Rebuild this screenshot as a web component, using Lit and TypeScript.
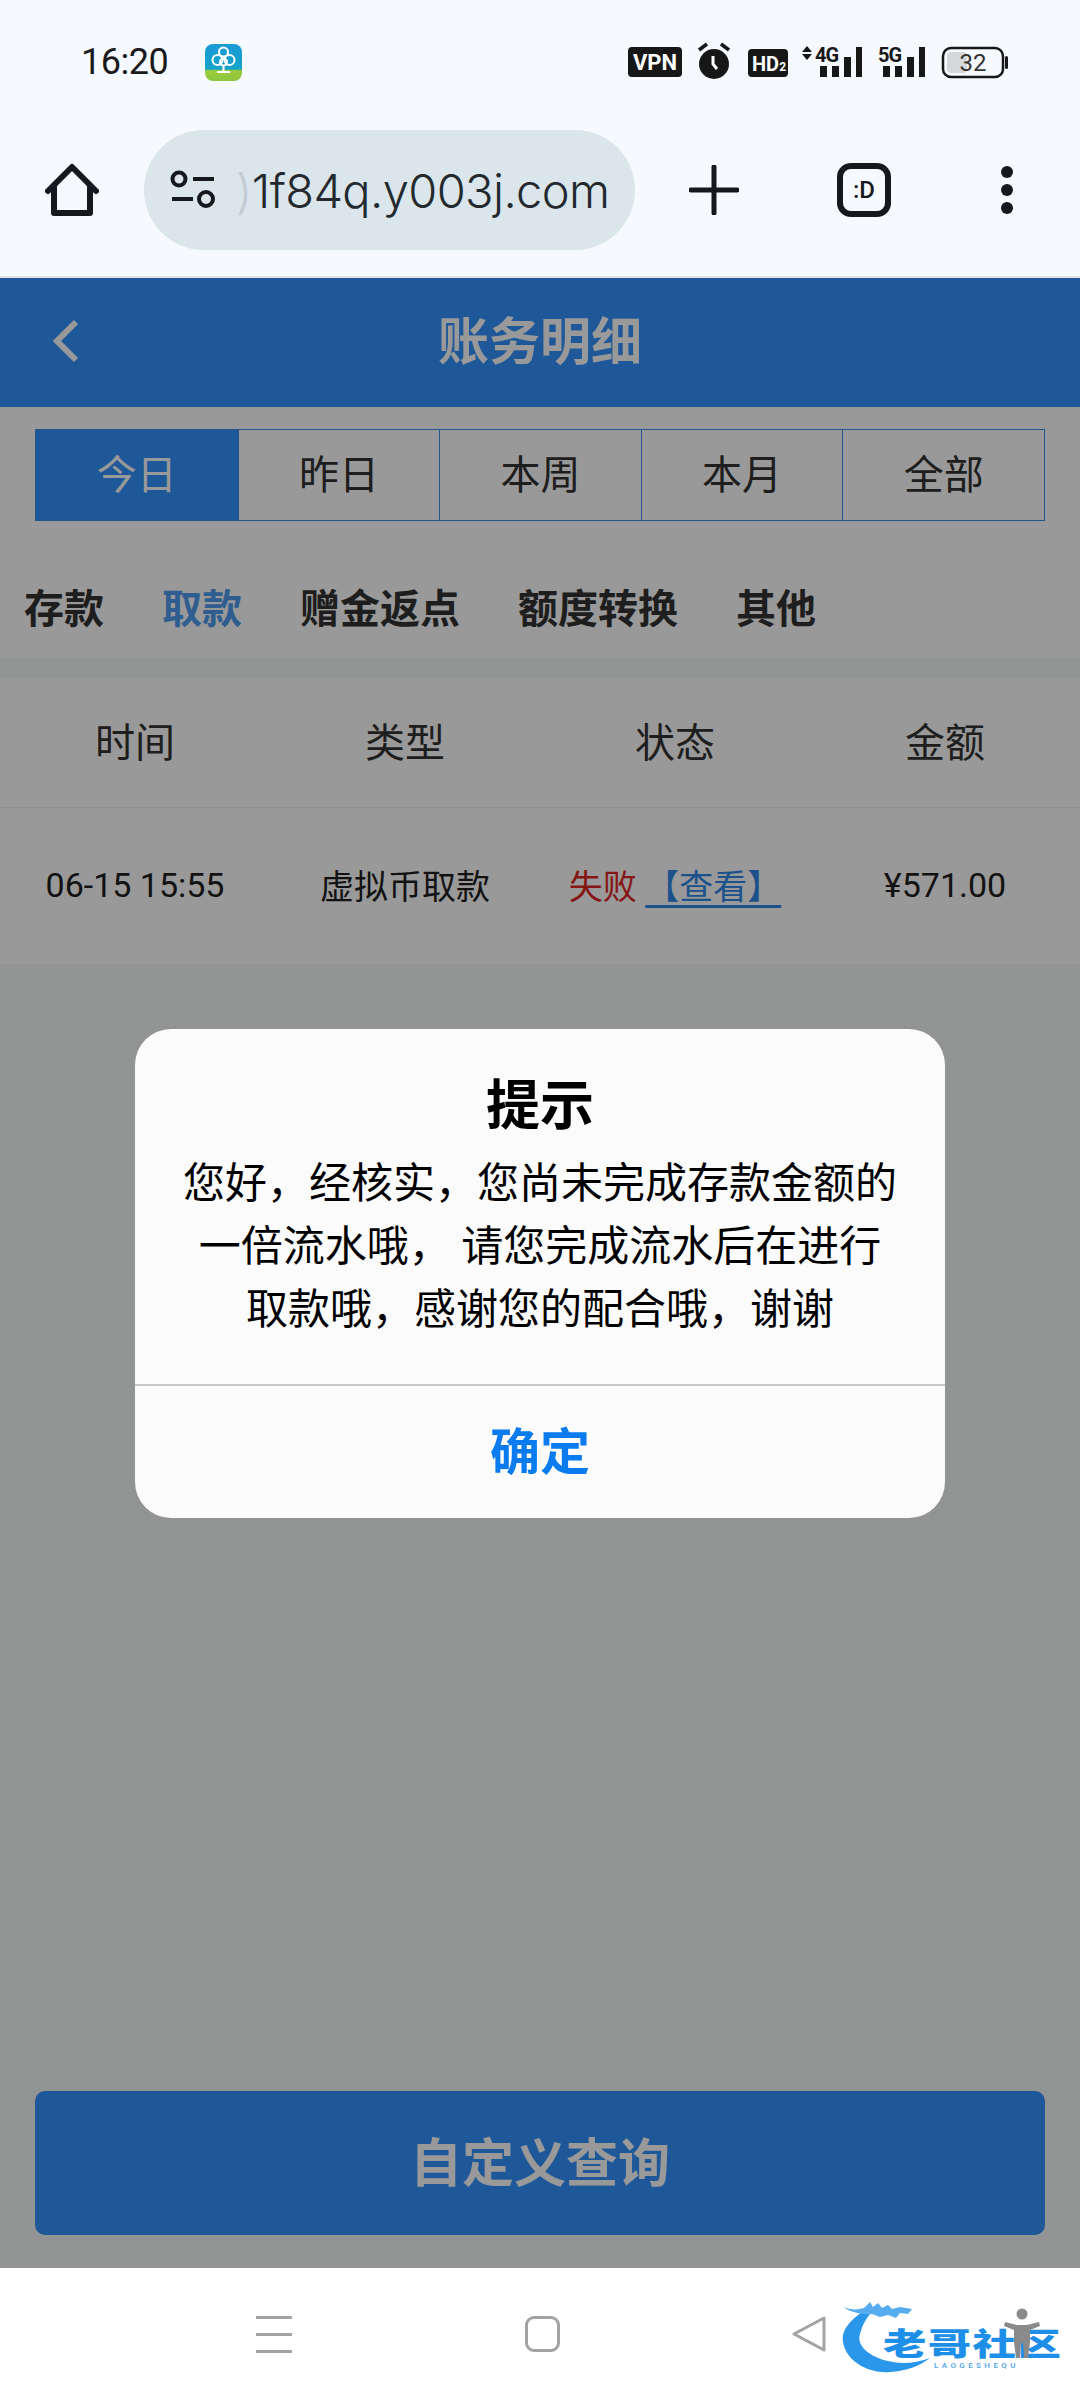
import { LitElement, html, css } from "lit";
import { customElement } from "lit/decorators.js";

const CJK = `Roboto, "Noto Sans CJK SC", sans-serif`;

@customElement("app-root")
export class AppRoot extends LitElement {
  static styles = css`
    :host { display: block; width: 1080px; height: 2400px; font-family: ${css([CJK] as any)}; overflow: hidden; background: #fff; }
    * { box-sizing: border-box; }
    .root { width: 1080px; height: 2400px; display: flex; flex-direction: column; }
    .chrome { height: 278px; background: #f6f9fe; border-bottom: 2px solid #dfe3e8; display: flex; flex-direction: column; }
    .status { height: 124px; display: flex; align-items: center; padding: 0 0 0 81px; position: relative; }
    .time { font-size: 36px; color: #1a1a1a; width: 124px; letter-spacing: -0.5px; line-height: 1; }
    .appicon { width: 37px; height: 37px; display: block; }
    .sicons { margin-left: auto; margin-right: 71px; display: flex; align-items: center; }
    .sicons svg { display: block; }
    .toolbar { height: 152px; display: flex; align-items: center; margin-top: -10px; position: relative; }
    .home { width: 54px; height: 56px; margin-left: 45px; display: block; }
    .pill { width: 491px; height: 120px; border-radius: 60px; background: #dae5ec; margin-left: 45px; display: flex; align-items: center; padding-left: 26px; overflow: hidden; }
    .tune { width: 46px; height: 40px; display: block; flex: none; }
    .url { font-family: "Inter", Roboto, sans-serif; font-size: 47px; color: #24292e; margin-left: 20px; white-space: nowrap; letter-spacing: -0.6px; line-height: 1; font-weight: 300; }
    .url i { font-style: normal; color: #c3ccd2; }
    .plus { width: 50px; height: 50px; margin-left: 54px; display: block; }
    .tabcount { width: 54px; height: 54px; margin-left: 98px; border: 6px solid #15181c; border-radius: 14px; font: 500 24px Roboto, sans-serif; color: #15181c; display: flex; align-items: center; justify-content: center; }
    .dots { width: 12px; height: 48px; margin-left: 110px; display: flex; flex-direction: column; justify-content: space-between; }
    .dots b { display: block; width: 12px; height: 12px; border-radius: 50%; background: #15181c; }

    .main { flex: 1; position: relative; display: flex; flex-direction: column; background: #f3f5f5; min-height: 0; }
    .header { height: 129px; background: #3493ff; position: relative; display: flex; align-items: center; justify-content: center; color: #fff; font-size: 51px; font-weight: 700; flex: none; padding-bottom: 10px; }
    .back { position: absolute; left: 50px; top: 40px; width: 32px; height: 46px; }
    .top { background: #ffffff; padding-top: 22px; flex: none; }
    .range { margin: 0 35px; height: 92px; display: grid; grid-template-columns: repeat(5, 1fr); border: 1px solid #3f8fe8; }
    .range div { display: flex; align-items: center; justify-content: center; font-size: 40px; color: #333; border-left: 1px solid #3f8fe8; padding-bottom: 6px; }
    .range div:first-child { border-left: 0; background: #3493ff; color: #fff; }
    .sub { height: 136px; display: flex; align-items: center; padding: 33px 0 0 24px; gap: 58px; font-size: 40px; font-weight: 700; color: #333; }
    .sub .on { color: #4f9cf0; }
    .band { height: 22px; background: #f3f8f5; flex: none; }
    .tbl { background: #fff; flex: none; }
    .tr { display: grid; grid-template-columns: repeat(4, 1fr); text-align: center; align-items: center; color: #333; }
    .th { height: 129px; font-size: 40px; border-bottom: 1px solid #f0f0f0; padding-bottom: 6px; }
    .td { height: 156px; font-size: 34px; color: #1e1e1e; padding-bottom: 3px; }
    .fail { color: #e02626; }
    .see { color: #2f88e8; text-decoration: underline; text-underline-offset: 6px; text-decoration-thickness: 3px; }
    .spacer { flex: 1; }
    .query { margin: 0 35px 33px; height: 144px; border-radius: 10px; background: #3493ff; color: #fff; font-size: 52px; font-weight: 700; display: flex; align-items: center; justify-content: center; flex: none; padding-bottom: 8px; }
    .scrim { position: absolute; inset: 0; background: rgba(0,0,0,.4); display: flex; align-items: center; justify-content: center; }
    .modal { width: 810px; height: 489px; background: #fbfbfb; border-radius: 36px; display: flex; flex-direction: column; color: #000; text-align: center; }
    .mtitle { font-size: 54px; font-weight: 700; line-height: 64px; margin-top: 46px; }
    .mbody { font-size: 42px; line-height: 63px; margin-top: 13px; padding: 0 20px; white-space: pre-line; height: 232px; }
    .mbtn { border-top: 2px solid #c9c9c9; flex: 1; display: flex; align-items: center; justify-content: center; font-size: 50px; font-weight: 700; color: #0a7cf0; padding-bottom: 8px; }

    .nav { height: 132px; background: #fff; position: relative; flex: none; display: flex; align-items: center; padding-left: 256px; }
    .menu { width: 36px; height: 37px; display: flex; flex-direction: column; justify-content: space-between; }
    .menu b { display: block; height: 3px; background: #a3a3a3; }
    .sq { width: 35px; height: 36px; margin-left: 233px; border: 3px solid #a3a3a3; border-radius: 9px; }
    .tri { width: 36px; height: 38px; margin-left: 231px; display: block; }
    .logo { position: absolute; left: 840px; top: 30px; width: 226px; height: 76px; }
    .logo svg { position: absolute; inset: 0; width: 226px; height: 76px; }
    .ltext { position: absolute; left: 43px; top: 28px; font: 900 31px/31px "Noto Sans CJK SC", sans-serif; color: #1e8fe8; white-space: nowrap; letter-spacing: 1px; transform: scaleX(1.4); transform-origin: left top; }
    .lsub { position: absolute; left: 94px; top: 64px; font: 500 8px/8px Roboto, sans-serif; color: #4aa3e8; letter-spacing: 3.4px; white-space: nowrap; }
    .logo .person { position: absolute; left: 164px; top: 10px; inset-inline-start: 164px; width: 36px; height: 50px; }
  `;

  render() {
    return html`<div class="root">
      <div class="chrome">
        <div class="status">
          <div class="time">16:20</div>
          <svg class="appicon" viewBox="0 0 37 37">
            <defs><linearGradient id="g" x1="0" y1="0" x2="0" y2="1"><stop offset="0" stop-color="#1a9ad6"/><stop offset=".68" stop-color="#16a3c8"/><stop offset=".72" stop-color="#9ccb3b"/><stop offset="1" stop-color="#8cc63f"/></linearGradient></defs>
            <rect width="37" height="37" rx="8" fill="url(#g)"/>
            <g fill="none" stroke="#fff" stroke-width="2"><circle cx="18.5" cy="8" r="4.5"/><circle cx="12.5" cy="16" r="5"/><circle cx="24.5" cy="16" r="5"/><circle cx="18.5" cy="18" r="3.5"/></g>
            <path d="M18.5 21v6M12 28h13" stroke="#fff" stroke-width="2"/>
          </svg>
          <div class="sicons">
            <svg width="381" height="40" viewBox="628 42 381 40">
              <rect x="628" y="47" width="54" height="30" rx="4" fill="#171717"/>
              <text x="655" y="70" text-anchor="middle" font-family="Roboto, sans-serif" font-weight="700" font-size="22" fill="#fff">VPN</text>
              <circle cx="714" cy="64" r="15" fill="#171717"/>
              <path d="M699 50l8-6M729 50l-8-6" stroke="#171717" stroke-width="3.5" fill="none"/>
              <path d="M713 56v8l4 5" stroke="#fff" stroke-width="3" fill="none"/>
              <rect x="748" y="49" width="40" height="28" rx="4" fill="#171717"/>
              <text x="752" y="71" font-family="Roboto, sans-serif" font-weight="700" font-size="20" fill="#fff">HD<tspan font-size="12">2</tspan></text>
              <path d="M807 46l5 6h-10zM807 60l5-6h-10z" fill="#171717"/>
              <text x="815" y="62" font-family="Roboto, sans-serif" font-weight="700" font-size="20" letter-spacing="-1" fill="#171717">4G</text>
              <path d="M820 66h7v11h-7zM832 66h7v11h-7zM844 57h7v20h-7zM856 47h6v30h-6z" fill="#171717"/>
              <text x="878" y="62" font-family="Roboto, sans-serif" font-weight="700" font-size="20" letter-spacing="-1" fill="#171717">5G</text>
              <path d="M883 66h7v11h-7zM895 66h7v11h-7zM907 57h7v20h-7zM919 47h6v30h-6z" fill="#171717"/>
              <rect x="943" y="48" width="60" height="29" rx="8" fill="none" stroke="#171717" stroke-width="2.5"/>
              <rect x="947" y="52" width="20" height="21" rx="4" fill="#d5d8da"/>
              <rect x="1005" y="56" width="3" height="13" rx="1.5" fill="#171717"/>
              <text x="973" y="71" text-anchor="middle" font-family="Roboto, sans-serif" font-size="24" fill="#333">32</text>
            </svg>
          </div>
        </div>
        <div class="toolbar">
          <svg class="home" viewBox="0 0 54 56"><path d="M3 29L27 5l24 24M9 24v27h36V24" fill="none" stroke="#15181c" stroke-width="6" stroke-linejoin="round" stroke-linecap="round"/></svg>
          <div class="pill">
            <svg class="tune" viewBox="0 0 46 40" fill="none" stroke="#15181c" stroke-width="4"><circle cx="9" cy="9" r="6.5"/><path d="M23 9h21M2 29h21"/><circle cx="36" cy="29" r="7"/></svg>
            <div class="url"><i>)</i>1f84q.y003j.com</div>
          </div>
          <svg class="plus" viewBox="0 0 50 50"><path d="M25 2v46M2 25h46" stroke="#15181c" stroke-width="5" stroke-linecap="round"/></svg>
          <div class="tabcount">:D</div>
          <div class="dots"><b></b><b></b><b></b></div>
        </div>
      </div>
      <div class="main">
        <div class="header">
          <svg class="back" viewBox="0 0 32 46"><path d="M26 4L7 23l19 19" fill="none" stroke="#fff" stroke-width="6"/></svg>
          账务明细
        </div>
        <div class="top">
          <div class="range"><div>今日</div><div>昨日</div><div>本周</div><div>本月</div><div>全部</div></div>
          <div class="sub"><span>存款</span><span class="on">取款</span><span>赠金返点</span><span>额度转换</span><span>其他</span></div>
        </div>
        <div class="band"></div>
        <div class="tbl">
          <div class="tr th"><div>时间</div><div>类型</div><div>状态</div><div>金额</div></div>
          <div class="tr td"><div>06-15 15:55</div><div>虚拟币取款</div><div><span class="fail">失败</span> <span class="see">【查看】</span></div><div>¥571.00</div></div>
        </div>
        <div class="spacer"></div>
        <div class="query">自定义查询</div>
        <div class="scrim">
          <div class="modal">
            <div class="mtitle">提示</div>
            <div class="mbody">您好，经核实，您尚未完成存款金额的
一倍流水哦， 请您完成流水后在进行
取款哦，感谢您的配合哦，谢谢</div>
            <div class="mbtn">确定</div>
          </div>
        </div>
      </div>
      <div class="nav">
        <div class="menu"><b></b><b></b><b></b></div>
        <div class="sq"></div>
        <svg class="tri" viewBox="0 0 36 38"><path d="M33 3v32L3 19z" fill="none" stroke="#a3a3a3" stroke-width="3" stroke-linejoin="round"/></svg>
        <div class="logo">
          <svg viewBox="0 0 226 76">
            <path d="M22 14C8 24 1 34 3 44C6 64 30 76 50 74C66 73 80 68 90 60C74 66 60 66 48 63C30 59 16 48 20 36C22 28 26 20 32 14Z" fill="#2b97ea"/>
            <path d="M3 9C10 12 18 12 24 10L30 4L33 9L38 5L42 10L48 7L52 11L60 9L72 11L68 16L60 15L56 20L48 17L40 19L32 16C22 17 10 14 3 9Z" fill="#55acee"/>
          </svg>
          <div class="ltext">老哥社区</div>
          <div class="lsub">LAOGESHEQU</div>
          <svg class="person" viewBox="0 0 36 50"><circle cx="18" cy="6" r="5.5" fill="#8a8a8a"/><path d="M1 14l12 3h10l12-3 1 4-10 4v12l-2 16h-4l-1-15h-2l-1 15h-4l-2-16V22L0 18z" fill="#8a8a8a"/></svg>
        </div>
      </div>
    </div>`;
  }
}
